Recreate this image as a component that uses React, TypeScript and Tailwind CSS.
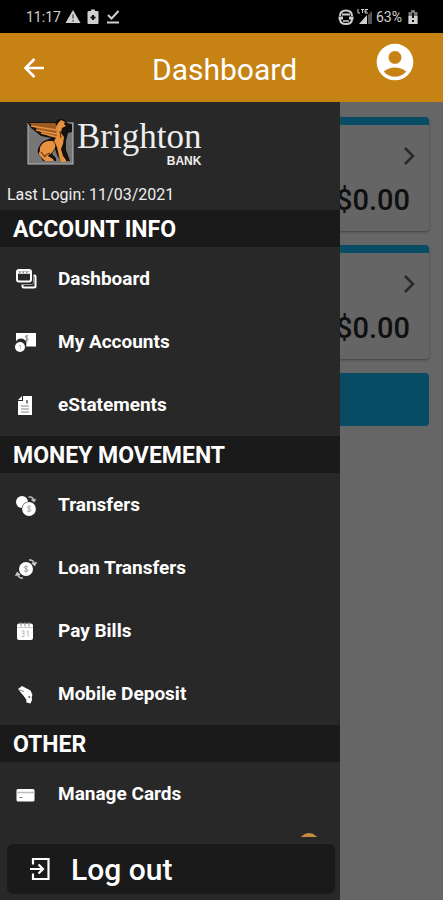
import type { ReactNode } from "react";
import { MdAccountCircle } from "react-icons/md";

function Icon({
  size = "size-6",
  box = 24,
  children,
}: {
  size?: string;
  box?: number;
  children: ReactNode;
}) {
  return (
    <svg
      viewBox={`0 0 ${box} ${box}`}
      className={`${size} shrink-0`}
      fill="currentColor"
      aria-hidden="true"
    >
      {children}
    </svg>
  );
}

const icons = {
  dashboard: (
    <g fill="none" stroke="currentColor" strokeWidth="2">
      <rect x="3" y="2" width="14" height="11.500" rx="2" />
      <path d="M3 4.500h14" strokeWidth="2.500" />
      <path d="M5 4.200h1.500M8.500 4.200h1.500M12 4.200h1.500" stroke="#555" strokeWidth="1" />
      <path d="M19.500 7.500h1c.6 0 1 .4 1 1V18c0 1-.5 1.500-1.500 1.500H10c-1 0-1.500-.5-1.500-1.500v-1.500" />
      <path d="M9 16.500h8.500c1.300 0 2-.7 2-2V8" strokeWidth="1" stroke="#999" />
    </g>
  ),
  accounts: (
    <>
      <path d="M2 2h20v13.500H12A5.500 5.500 0 0 0 2 10.500z" />
      <path
        d="M14 5c-2-.8-3 .2-2.500 1.300.4 1 2.700.7 2.700 2.200 0 1.200-1.400 1.700-3 .8M12.700 4v7"
        fill="none"
        stroke="#888"
        strokeWidth="1"
      />
      <circle cx="6" cy="16" r="5" />
      <path d="M4.500 15l2-1M6.500 14v4" stroke="#bbb" strokeWidth="1" />
    </>
  ),
  statements: (
    <>
      <path d="M9 2h9v19H4V7h5z" />
      <path d="M4 6L8 2v4z" />
      <path d="M7 12h8M7 15h8M7 18h8" stroke="#888" strokeWidth="1" />
      <path d="M13 6v3.500" stroke="#555" strokeWidth="1.500" />
    </>
  ),
  transfers: (
    <>
      <circle cx="8" cy="8" r="6" />
      <circle cx="15" cy="15" r="7.400" fill="#282828" />
      <circle cx="15" cy="15" r="6.900" />
      <path
        d="M17 12.800c-2-1.300-4-.4-3.700.9.300 1.400 3.700.9 3.700 2.500 0 1.400-2.400 1.800-4 .6M15 11.500v7"
        fill="none"
        stroke="#aaa"
        strokeWidth="1"
      />
      <path
        d="M14.500 3c3-.5 5 1 5.500 4M17.500 5.500l2.500 2 1.500-2.500"
        fill="none"
        stroke="#bbb"
        strokeWidth="1.500"
      />
    </>
  ),
  loans: (
    <>
      <circle cx="12" cy="12" r="7" />
      <path
        d="M14 9.800c-2-1.300-4-.4-3.700.9.300 1.400 3.700.9 3.700 2.500 0 1.400-2.400 1.800-4 .6M12 8.500v7"
        fill="none"
        stroke="#999"
        strokeWidth="1"
      />
      <path
        d="M15 3c3-.5 5 1 5.500 4.500M18 5.800l2.800 2.200 1.500-3M9 21c-3 .5-5-1-5.500-4.500M6 18.200L3.200 16l-1.500 3"
        fill="none"
        stroke="#ccc"
        strokeWidth="1.500"
      />
    </>
  ),
  bills: (
    <>
      <rect x="3" y="3.500" width="16" height="16.500" rx="2" />
      <path d="M3 7.500h16" stroke="#ccc" strokeWidth="1" />
      <path d="M7 2v4.500M11 2v4.500M15 2v4.500" stroke="#888" strokeWidth="1" />
      <path
        d="M7.500 11H10v2.500H8.500H10v3H7.500M12.500 12l1.500-1v5.500"
        fill="none"
        stroke="#bbb"
        strokeWidth="1"
      />
    </>
  ),
  deposit: (
    <>
      <path d="M4 6l4-3 8.500 4.500 2 4.500-3.500 6-3-2z" />
      <path d="M12 14l5.500-2 .5 5-1.500 3.500-4-1z" />
      <path d="M4 6.500l6 2" stroke="#888" strokeWidth="1" />
      <path d="M14.500 13.500l1.500 1" stroke="#333" strokeWidth="1.500" />
    </>
  ),
  cards: (
    <>
      <rect x="2.500" y="6" width="18" height="12.500" rx="1.500" />
      <path d="M2.500 9.500h18" stroke="#bbb" strokeWidth="1.500" />
      <path d="M5.500 14.500h3" stroke="#777" strokeWidth="1" />
    </>
  ),
};

const sections = [
  {
    title: "ACCOUNT INFO",
    items: [
      { label: "Dashboard", icon: icons.dashboard },
      { label: "My Accounts", icon: icons.accounts },
      { label: "eStatements", icon: icons.statements },
    ],
  },
  {
    title: "MONEY MOVEMENT",
    items: [
      { label: "Transfers", icon: icons.transfers },
      { label: "Loan Transfers", icon: icons.loans },
      { label: "Pay Bills", icon: icons.bills },
      { label: "Mobile Deposit", icon: icons.deposit },
    ],
  },
  {
    title: "OTHER",
    items: [{ label: "Manage Cards", icon: icons.cards }],
  },
];

function StatusBar() {
  return (
    <div className="flex h-[33px] shrink-0 items-center justify-between bg-black pt-px pr-[22px] pl-[26px] text-[14px] text-[#d0d0d0]">
      <div className="flex items-center gap-1">
        <span>11:17</span>
        <Icon size="size-4" box={16}>
          <path d="M8 1l7.500 13H.5z" />
          <path d="M8 5.500v4M8 11v1.500" stroke="#555" strokeWidth="1.500" />
        </Icon>
        <Icon size="size-4" box={16}>
          <path d="M6 .5h4v1.500h2q1.500 0 1.500 1V14q0 1-1 1h-9q-1 0-1-1V3q0-1 1.500-1h2z" />
          <path d="M5.500 8.500h5M8 6v5" stroke="#111" strokeWidth="2" />
        </Icon>
        <Icon size="size-4" box={16}>
          <path
            d="M3 6l3.500 3.500L13.500 2M2 13.500h12"
            fill="none"
            stroke="currentColor"
            strokeWidth="2"
          />
        </Icon>
      </div>
      <div className="flex items-center gap-[3px]">
        <Icon size="size-4" box={16}>
          <path
            d="M2 7C2 3 4 1.500 8 1.500S14 3 14 7M2 10c0 4 2 5 6 5s6-1 6-5"
            fill="none"
            stroke="currentColor"
            strokeWidth="2"
          />
          <path d="M4 4.500h8v2H4zM.5 7.500H5v3H.5zM11 7.500h4.500v3H11z" />
          <path d="M5 12h6" stroke="currentColor" strokeWidth="1.500" />
        </Icon>
        <Icon size="size-4" box={16}>
          <path
            d="M1 0v4h2M4 .5h3M5.500.5V4M11 .5H8V4h3M8 2.200h2"
            fill="none"
            stroke="currentColor"
            strokeWidth="1"
          />
          <path d="M10 6v9H2z" />
          <path d="M11 6l4-4v13h-4z" fill="#555" />
        </Icon>
        <span>63%</span>
        <Icon size="size-4" box={16}>
          <path d="M6 1h4v2h2.500v12h-9V3H6z" fill="#777" />
          <path d="M3.500 7h9v8h-9z" />
          <path d="M8 4v5M8 11v2" stroke="#111" strokeWidth="2" />
        </Icon>
      </div>
    </div>
  );
}

function TopBar() {
  return (
    <header className="flex h-[69px] shrink-0 items-center bg-[#c68213] pr-[26px] pl-[22px] text-white">
      <button type="button" aria-label="Back" className="w-8">
        <Icon>
          <path
            d="M22 12H4M12.500 3L3.500 12l9 9"
            fill="none"
            stroke="currentColor"
            strokeWidth="2.600"
          />
        </Icon>
      </button>
      <h1 className="flex-1 pt-1 pl-[22px] text-center text-[30px] leading-9">
        Dashboard
      </h1>
      <button type="button" aria-label="Profile" className="pb-3">
        <MdAccountCircle className="size-11" />
      </button>
    </header>
  );
}

function AccountCard() {
  return (
    <a
      href="#account"
      className="flex h-[114px] flex-col rounded border-t-8 border-[#12c0ff] bg-[#fdfdfd] pt-[21px] pr-[13px] text-right shadow-sm shadow-black/30"
    >
      <svg viewBox="0 0 12 20" className="h-5 w-3 self-end" aria-hidden="true">
        <path d="M1 2l8 8-8 8" fill="none" stroke="#666" strokeWidth="2.500" />
      </svg>
      <span className="mt-[18px] pr-1.5 text-[29px] leading-8 font-medium text-[#2a2a2a]">
        $0.00
      </span>
    </a>
  );
}

function Logo() {
  return (
    <div className="flex h-[77px] items-start gap-0.5 pt-4 pl-[27px]">
      <svg viewBox="0 0 48 48" className="size-12" aria-hidden="true">
        <rect x="1" y="4" width="45" height="41" fill="#777" stroke="#bbb" />
        {/* dark outline behind the griffin */}
        <path
          d="M0 3h28l3-3h6l3 4 5 1v8l-4 1-2 8v9l3 8 1 3h-9l-4-6-2-6-3 5 4 4v3H16l-3-5c-3-3-3-7 0-11 2-4 7-5 11-7L14 17 4 9z"
          fill="#16120f"
        />
        <path d="M2 4h26l3 4 1 11-8-1-10-5z" fill="#9a5a22" />
        <path
          d="M4 7l25 4M9 11l21 4M14 14l16 4"
          stroke="#e8913f"
          strokeWidth="1.300"
        />
        <path
          d="M31 4l3-3 4 2-1 2 2 2-4 2-1 5 3 4-1 7-2 5 2 7 3 4v2h-5l-2-6-2-9-3-6 3-5-1-8z"
          fill="#e8913f"
        />
        <path
          d="M26 22c3 3 3 7 0 10-1 3-4 3-5 5l5 3 1 2h-9l-3-3c-3-3-4-4-2-7-1-5 3-9 8-10z"
          fill="#e8913f"
        />
        <path
          d="M14 33l4 5M23 34c-3 1-5 2-5 4M33 12l1 7"
          fill="none"
          stroke="#5e3412"
          strokeWidth="1.200"
        />
      </svg>
      <div className="flex flex-col items-end font-['Liberation_Serif',serif] text-[#eee]">
        <span className="text-[35px] leading-9">Brighton</span>
        <span className="font-['Liberation_Sans',sans-serif] text-[12px] leading-3 font-bold">
          BANK
        </span>
      </div>
    </div>
  );
}

function Drawer() {
  return (
    <aside className="absolute inset-y-0 left-0 flex w-[340px] flex-col bg-[#282828] text-white">
      <nav className="min-h-0 flex-1 overflow-hidden pt-px">
        <Logo />
        <p className="h-[30px] pl-[7px] text-[16px] leading-[30px] text-[#eee]">
          Last Login: 11/03/2021
        </p>
        {sections.map((section) => (
          <section key={section.title}>
            <h2 className="h-[37px] bg-[#1a1a1a] pl-[13px] text-[23px] leading-10 font-bold">
              {section.title}
            </h2>
            <ul>
              {section.items.map((item) => (
                <li key={item.label}>
                  <a
                    href="#menu"
                    className="flex h-[63px] items-center gap-5 pt-0.5 pl-[14px] text-[19px] font-bold"
                  >
                    <Icon>{item.icon}</Icon>
                    {item.label}
                  </a>
                </li>
              ))}
            </ul>
          </section>
        ))}
        <div className="flex justify-end pt-2 pr-[21px]">
          <span className="size-5 rounded-full bg-[#c98a48]" />
        </div>
      </nav>
      <div className="shrink-0 pt-[7px] pr-[5px] pb-1.5 pl-[7px]">
        <button
          type="button"
          className="flex h-[50px] w-full items-center gap-[19px] rounded-md bg-[#1a1a1a] pl-[21px] text-[30px] font-medium"
        >
          <Icon>
            <path
              d="M5 7.500V2h15.500v20H5v-5.500M2 12h12M10.500 7.500L15 12l-4.500 4.500"
              fill="none"
              stroke="currentColor"
              strokeWidth="2.200"
            />
          </Icon>
          Log out
        </button>
      </div>
    </aside>
  );
}

export default function App() {
  return (
    <div className="flex h-screen flex-col overflow-hidden font-[Roboto,sans-serif]">
      <StatusBar />
      <TopBar />
      <div className="relative min-h-0 flex-1 bg-white">
        <main className="flex flex-col gap-3.5 px-3.5 pt-[15px]">
          <AccountCard />
          <AccountCard />
          <div className="h-[53px] rounded bg-[#14bcfa]" />
        </main>
        <div className="absolute inset-0 bg-black/60" />
        <Drawer />
      </div>
    </div>
  );
}
